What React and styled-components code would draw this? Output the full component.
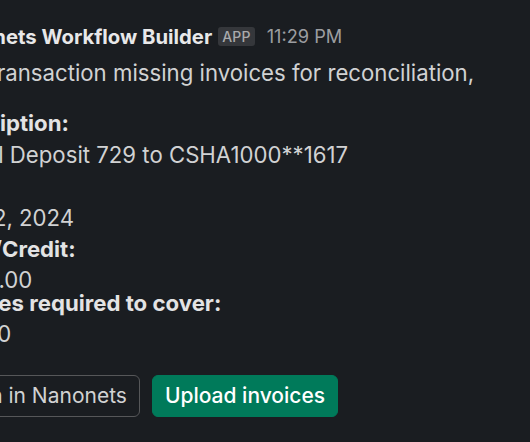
import React from 'react';
import styled, { createGlobalStyle } from 'styled-components';

const GlobalStyle = createGlobalStyle`
  html, body {
    margin: 0;
    padding: 0;
    background: #1a1d21;
  }
  body {
    width: 530px;
    height: 442px;
    overflow: hidden;
    font-family: Inter, "Noto Sans", sans-serif;
    color: #d1d2d3;
  }
`;

const Message = styled.div`
  margin-left: -64px;
  padding-top: 22px;
  white-space: nowrap;
`;

const Header = styled.div`
  display: flex;
  align-items: center;
  height: 28px;
  margin-left: 5px;
`;

const Sender = styled.span`
  font-size: 20.3px;
  font-weight: 700;
  color: #e8e8e9;
`;

const Badge = styled.span`
  margin-left: 6px;
  padding: 0 4px;
  height: 19px;
  line-height: 19px;
  border-radius: 3px;
  background: #35373b;
  color: #a9aaac;
  font-size: 14px;
  font-weight: 500;
  letter-spacing: 0.2px;
`;

const Time = styled.span`
  margin-left: 12px;
  font-size: 18.2px;
  color: #9c9da0;
`;

const Text = styled.div`
  font-size: 22.2px;
  line-height: 31.4px;
  margin-top: ${(p) => p.$top || 0}px;
`;

const Label = styled(Text)`
  font-weight: 700;
  color: #e3e3e4;
`;

const Field = styled.div`
  margin-top: ${(p) => p.$top || 0}px;
`;

const Actions = styled.div`
  display: flex;
  gap: 12px;
  margin-top: 25px;
`;

const Button = styled.button`
  height: 42px;
  padding: 0 12px;
  border-radius: 6px;
  font-family: inherit;
  font-size: 21px;
  font-weight: ${(p) => (p.$primary ? 500 : 400)};
  color: ${(p) => (p.$primary ? '#ffffff' : '#d1d2d3')};
  background: ${(p) => (p.$primary ? '#007a5a' : '#1a1d21')};
  border: 1px solid ${(p) => (p.$primary ? '#007a5a' : '#565759')};
`;

const fields = [
  { label: 'Description:', value: 'Virtual Deposit 729 to CSHA1000**1617', top: 0 },
  { label: 'Date:', value: 'Dec 12, 2024', top: 0 },
  { label: 'Debit/Credit:', value: '$1,170.00', top: 0 },
  { label: 'Batches required to cover:', value: '$2,250', top: -9 },
];

export default function App() {
  return (
    <>
      <GlobalStyle />
      <Message>
        <Header>
          <Sender>Nanonets Workflow Builder</Sender>
          <Badge>APP</Badge>
          <Time>11:29 PM</Time>
        </Header>
        <Text $top={7}>New transaction missing invoices for reconciliation,</Text>
        <Field $top={19}>
          {fields.map((f) => (
            <Field key={f.label} $top={f.top}>
              <Label>{f.label}</Label>
              <Text>{f.value}</Text>
            </Field>
          ))}
        </Field>
        <Actions>
          <Button>Open in Nanonets</Button>
          <Button $primary>Upload invoices</Button>
        </Actions>
      </Message>
    </>
  );
}
